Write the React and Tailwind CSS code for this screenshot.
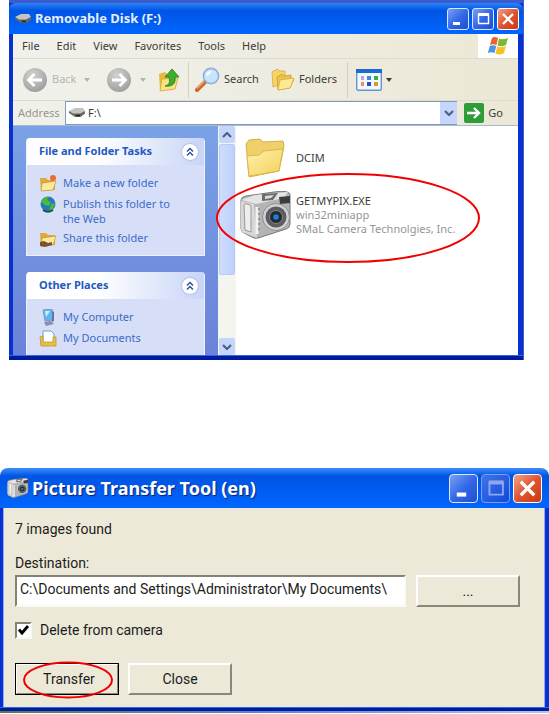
import React from "react";

function TitleButton({ kind, large, disabled }) {
  const size = large ? "w-[29px] h-[29px] rounded-[4px]" : "w-[22px] h-[22px] rounded-[3px]";
  const colour =
    kind === "close"
      ? "bg-linear-to-br from-[#f0a088] via-[#e0532f] to-[#c83a10] border-white"
      : disabled
        ? "bg-linear-to-br from-[#3f74ea] to-[#0f48d8] border-[#7d9df2]"
        : "bg-linear-to-br from-[#7ba0f5] via-[#3468e6] to-[#1d4fd0] border-[#dbe6ff]";
  const stroke = disabled ? "#8fa6ee" : "#fff";
  return (
    <button type="button" aria-label={kind} disabled={disabled} className={`block shrink-0 border ${size} ${colour}`}>
      <svg viewBox="0 0 20 20" className="block h-full w-full" fill="none" stroke={stroke}>
        {kind === "minimize" && <path d="M5 14.5h7" strokeWidth="3" />}
        {kind === "maximize" && (
          <>
            <path d="M5 5.5h11" strokeWidth="3" />
            <path d="M5.5 5v9.5h10V5" strokeWidth="1.4" />
          </>
        )}
        {kind === "close" && <path d="M5 5l10 10M15 5L5 15" strokeWidth="2.4" />}
      </svg>
    </button>
  );
}

function Disk() {
  return (
    <svg viewBox="0 0 18 12" className="h-3 w-[18px] shrink-0">
      <path d="M1 4l6-3h8l2 3-5 3H5z" fill="#c4c4c0" />
      <path d="M1 4l4 2.5h7L17 4v2.500l-4.500 3.500H7L1 6z" fill="#66665f" />
      <path d="M8 8.500h4" stroke="#222" strokeWidth="1.500" />
    </svg>
  );
}

function RoundArrow({ forward }) {
  return (
    <svg viewBox="0 0 26 26" className="h-[26px] w-[26px] shrink-0">
      <defs>
        <radialGradient id="grey" cx="0.4" cy="0.3" r="0.8">
          <stop offset="0" stopColor="#d2d2d0" />
          <stop offset="0.7" stopColor="#aaa" />
          <stop offset="1" stopColor="#999" />
        </radialGradient>
      </defs>
      <circle cx="13" cy="13" r="12" fill="url(#grey)" />
      <path
        d={forward ? "M6 13h13M13.500 7l6 6-6 6" : "M20 13H7M12.500 7l-6 6 6 6"}
        stroke="#fff"
        strokeWidth="2.800"
        fill="none"
      />
    </svg>
  );
}

function Caret() {
  return (
    <svg viewBox="0 0 6 4" className="h-1 w-1.5 shrink-0">
      <path d="M0 0h6L3 4z" fill="currentColor" />
    </svg>
  );
}

function UpFolder() {
  return (
    <svg viewBox="0 0 22 24" className="h-6 w-[22px] shrink-0">
      <path d="M1 6l6-2 2 2h6v4l5 1-3 10-15 2z" fill="#e8b93c" />
      <path d="M4 11l16-1-3 11-15 2z" fill="#fbe384" stroke="#cfa032" strokeWidth=".7" />
      <path d="M7 18c5-1 5-5 4-9H7l7-8 7 8h-4c1 6-2 10-10 9z" fill="#3cae2c" stroke="#1c7c18" strokeWidth=".8" />
    </svg>
  );
}

function Magnifier() {
  return (
    <svg viewBox="0 0 25 25" className="h-[25px] w-[25px] shrink-0">
      <path d="M2 23l8-8" stroke="#c9682a" strokeWidth="4" strokeLinecap="round" />
      <path d="M2 21.500l7-7" stroke="#f2a868" strokeWidth="1.500" />
      <circle cx="16" cy="9" r="7.600" fill="#c8e6fb" stroke="#8fb0e4" strokeWidth="1.600" />
      <path d="M11 9c0-4 3-5 6-5-2 2-2 4-6 5z" fill="#fff" />
    </svg>
  );
}

function FoldersIcon() {
  return (
    <svg viewBox="0 0 24 24" className="h-6 w-6 shrink-0">
      <path d="M1 4l5-3 3 2h5v12L2 19z" fill="#f6d568" stroke="#d6a93a" strokeWidth=".8" />
      <path d="M6 9l5-3 2 2 7-1v3l3 1-4 9-12 2z" fill="#efc148" stroke="#d09c2c" strokeWidth=".8" />
      <path d="M9 12l14-2-4 10-12 2z" fill="#fdea95" stroke="#d6a93a" strokeWidth=".7" />
    </svg>
  );
}

function ViewsIcon() {
  return (
    <svg viewBox="0 0 26 22" className="h-[22px] w-[26px] shrink-0">
      <rect x=".7" y=".7" width="24.600" height="20.600" rx="1.500" fill="#f4f8fd" stroke="#5b96dc" strokeWidth="1.400" />
      <path d="M0 2h26" stroke="#1c6ad4" strokeWidth="4" />
      <path d="M5 7h3v4H5z" fill="#b3a7dc" />
      <path d="M11 7h4v4h-4z" fill="#3c8de0" />
      <path d="M18 7h4v4h-4z" fill="#3cae3c" />
      <path d="M5 13h3v4H5z" fill="#f48a62" />
      <path d="M11 13h4v4h-4z" fill="#2a50b8" />
      <path d="M18 13h4v4h-4z" fill="#d0a028" />
    </svg>
  );
}

function Flag() {
  return (
    <svg viewBox="0 0 22 20" className="h-5 w-[22px]">
      <path d="M5 2c2-1.500 4-1 6 0L9.500 9C7 8 5 8 3 9z" fill="#f0602c" />
      <path d="M12 2.500c3 1 5 1 9-.500L19 9c-3 1.500-6 1.500-8.500.500z" fill="#78bb30" />
      <path d="M2.800 10c2-1 4-1 6.500 0L7.500 17C5 16 3 16 .800 17z" fill="#4a96e4" />
      <path d="M10.300 10.500c3 1 5 1 8.500-.500L17 17c-3 2-6 2-8.500.500z" fill="#f8c128" />
    </svg>
  );
}

function Camera({ className }) {
  return (
    <svg viewBox="0 0 52 48" className={className}>
      <path d="M1 9q0-3 5-4L34 1q14-2 16 2v30q0 4-4 5L18 47q-3 1-6-1L4 42q-3-1-3-5z" fill="#b4b4b4" stroke="#777" />
      <path d="M1 10l13 3 3 34L4 42q-3-1-3-5z" fill="#d8d8d8" />
      <path d="M4 14q0-2 3-1 4 0 4 3v25l-6-2z" fill="#eee" stroke="#999" />
      <path d="M1 9l14-5 33-3-4 6-28 6z" fill="#e4e4e4" />
      <path d="M22 3l16-1-5 7-11 1z" fill="#6c6c6c" />
      <path d="M25 5l9-1-3 3-6 1z" fill="#ddd" />
      <path d="M39 6l11-1v7l-10 1z" fill="#3d3d3d" />
      <path d="M17 16v27" stroke="#f2f2f2" strokeWidth="3" />
      <path d="M19 17v25" stroke="#888" strokeWidth="1.500" strokeDasharray="2 3" />
      <circle cx="36" cy="26" r="13.500" fill="#d2d2d2" stroke="#8e8e8e" />
      <circle cx="36" cy="26" r="10.500" fill="#5a5d62" />
      <circle cx="36" cy="26" r="6.500" fill="#25282c" stroke="#888" />
      <circle cx="36" cy="26" r="2.800" fill="#1c7ce0" />
    </svg>
  );
}

function BigFolder() {
  return (
    <svg viewBox="0 0 40 40" className="h-10 w-10">
      <defs>
        <linearGradient id="folder" x1="0" y1="0" x2="1" y2="1">
          <stop offset="0" stopColor="#fff3ae" />
          <stop offset="1" stopColor="#f4cf58" />
        </linearGradient>
      </defs>
      <path d="M1 6l3-4 11-1 3 3 20-1 1 5-5 25L4 39z" fill="#f0d069" stroke="#d4b04a" />
      <path d="M2 18l12-1 5-4 19-2-4 22L4 38z" fill="url(#folder)" stroke="#dcb850" />
    </svg>
  );
}

function TaskIcon({ kind }) {
  return (
    <svg viewBox="0 0 18 17" className="h-[17px] w-[18px] shrink-0">
      {(kind === "new" || kind === "share") && (
        <>
          <path d="M1 3h6l2 2h7v10l-14 1z" fill="#e0a93a" />
          <path d="M3 8l14-2-3 9-12 1z" fill="#fde99a" stroke="#b9882c" strokeWidth=".6" />
        </>
      )}
      {kind === "new" && <circle cx="14" cy="3" r="3" fill="#ee6c32" />}
      {kind === "share" && <path d="M1 12l4-1 4 2 4-1v3l-7 2-5-1z" fill="#80502c" />}
      {kind === "web" && (
        <>
          <circle cx="9" cy="8" r="7.500" fill="#2778c4" />
          <path d="M2 6c2-4 5-6 8-5L8 4l4 2-2 4-4-1zM12 8l4-1-2 6-4 2z" fill="#49bb38" />
          <path d="M4 14c3 2 7 2 10 0" stroke="#19594e" strokeWidth="2" fill="none" />
        </>
      )}
      {kind === "computer" && (
        <>
          <path d="M4 1l9-1 1 11-8 1z" fill="#5eb7f0" stroke="#8298bc" />
          <path d="M6 2l5 0-4 6z" fill="#c8efff" />
          <path d="M13 2l2 1v9l-2 1z" fill="#657798" />
          <path d="M5 13l7-1 3 3-8 2z" fill="#8b8fa8" />
        </>
      )}
      {kind === "documents" && (
        <>
          <path d="M4 1h8l3 3v9H4z" fill="#fff" stroke="#6f9cd0" />
          <path d="M1 7l3-1v6h10V7l3 0v9H2z" fill="#eabf42" stroke="#b98c2b" strokeWidth=".7" />
        </>
      )}
    </svg>
  );
}

function Task({ kind, children }) {
  return (
    <a href="#" className="flex items-start gap-1.5 text-[11px] leading-[15px] text-[#3c6bc9]">
      <TaskIcon kind={kind} />
      <span>{children}</span>
    </a>
  );
}

function TaskPanel({ title, children }) {
  return (
    <section className="shrink-0 rounded-t-[4px] border-x border-b border-[#edf1fc] bg-[#d6dff7]">
      <header className="flex h-[27px] items-center justify-between rounded-t-[3px] bg-linear-to-r from-white from-40% to-[#c8d5f7] pr-1.5 pl-3">
        <h2 className="text-[11px] font-bold text-[#2459c2]">{title}</h2>
        <button type="button" aria-label={`Collapse ${title}`} className="h-4 w-4 rounded-full bg-white shadow-[0_0_2px_#8090b8]">
          <svg viewBox="0 0 16 16" className="h-4 w-4" fill="none" stroke="#31549f" strokeWidth="1.500">
            <path d="M5 7.500l3-3 3 3M5 11.500l3-3 3 3" />
          </svg>
        </button>
      </header>
      <div className="flex flex-col gap-1 pt-2.5 pb-2 pl-3">{children}</div>
    </section>
  );
}

function ScrollButton({ up }) {
  return (
    <button type="button" aria-label={up ? "Scroll up" : "Scroll down"} className="flex h-[17px] shrink-0 items-center justify-center rounded-[2px] bg-[#c6d5fc]">
      <svg viewBox="0 0 10 6" className="h-1.5 w-2.5" fill="none" stroke="#4d6185" strokeWidth="2.200">
        <path d={up ? "M1 5l4-4 4 4" : "M1 1l4 4 4-4"} />
      </svg>
    </button>
  );
}

function Explorer() {
  return (
    <section className="relative mr-[25px] ml-[9px] border-t-[3px] border-r border-[#3c5ccc] bg-[#0831d0] font-['Noto_Sans',sans-serif] text-[11px] text-[#3c3c38]">
      <header className="flex h-[31px] items-center gap-[3px] rounded-t-[6px] bg-linear-to-b from-[#2b83f8] via-[#0054e4] via-25% to-[#0066ff] pr-1 pl-[5px]">
        <Disk />
        <h1 className="flex-1 text-[13px] font-bold text-[#e6eeff]">Removable Disk (F:)</h1>
        <TitleButton kind="minimize" />
        <TitleButton kind="maximize" />
        <TitleButton kind="close" />
      </header>
      <div className="mr-[5px] ml-1">
        <nav className="flex h-6 items-center bg-linear-to-r from-[#f1f1ec] to-[#ece8d6] pl-[9px]">
          <div className="flex flex-1 gap-[17px]">
            <button type="button">File</button>
            <button type="button">Edit</button>
            <button type="button">View</button>
            <button type="button">Favorites</button>
            <button type="button">Tools</button>
            <button type="button">Help</button>
          </div>
          <div className="flex h-full w-10 items-center justify-center bg-white">
            <Flag />
          </div>
        </nav>
        <div className="flex h-[43px] items-center border-y border-[#dedbca] bg-linear-to-r from-[#f1f1ec] to-[#ece8d6] pl-[9px]">
          <button type="button" className="flex w-[72px] items-center gap-1 text-[#b5b5ad]">
            <RoundArrow />
            <span className="w-7 text-left">Back</span>
            <Caret />
          </button>
          <button type="button" aria-label="Forward" className="ml-3 flex w-[52px] items-center gap-2 text-[#b5b5ad]">
            <RoundArrow forward />
            <Caret />
          </button>
          <button type="button" aria-label="Up">
            <UpFolder />
          </button>
          <span className="ml-2 h-9 w-px bg-[#d2cfbd]" />
          <button type="button" className="ml-1.5 flex w-[76px] items-center gap-1">
            <Magnifier />
            Search
          </button>
          <button type="button" className="flex w-[72px] items-center gap-1">
            <FoldersIcon />
            Folders
          </button>
          <span className="ml-1 h-9 w-px bg-[#d2cfbd]" />
          <button type="button" aria-label="Views" className="ml-2 flex items-center gap-1">
            <ViewsIcon />
            <Caret />
          </button>
        </div>
        <div className="flex h-6 items-center bg-linear-to-r from-[#f1f1ec] to-[#ece8d6] pr-[15px]">
          <label htmlFor="address" className="w-[52px] shrink-0 pl-[5px] text-[#969689]">Address</label>
          <div className="flex h-full min-w-0 flex-1 items-center border-y border-l border-[#7f9db9] bg-white pl-0.5">
            <Disk />
            <input id="address" defaultValue="F:\" className="min-w-0 flex-1 bg-transparent pl-0.5 outline-none" />
            <button type="button" aria-label="Address list" className="flex h-full w-[17px] items-center justify-center bg-[#c6d5fc]">
              <svg viewBox="0 0 10 6" className="h-1.5 w-2.5" fill="none" stroke="#4d6185" strokeWidth="2.200">
                <path d="M1 1l4 4 4-4" />
              </svg>
            </button>
          </div>
          <button type="button" className="ml-[7px] flex items-center gap-1">
            <svg viewBox="0 0 20 20" className="h-5 w-5">
              <rect width="20" height="20" rx="2" fill="#2e9d38" />
              <path d="M3 10h12M10 5l5 5-5 5" fill="none" stroke="#fff" strokeWidth="2.400" />
            </svg>
            Go
          </button>
        </div>
        <div className="flex h-[230px] border-t border-[#a9b9d2] bg-white">
          <aside className="flex w-[205px] shrink-0 flex-col gap-4 overflow-hidden bg-linear-to-b from-[#7ba2e7] to-[#6b82d8] px-[13px] pt-3">
            <TaskPanel title="File and Folder Tasks">
              <Task kind="new">Make a new folder</Task>
              <Task kind="web">
                Publish this folder to
                <br />
                the Web
              </Task>
              <Task kind="share">Share this folder</Task>
            </TaskPanel>
            <TaskPanel title="Other Places">
              <Task kind="computer">My Computer</Task>
              <Task kind="documents">My Documents</Task>
            </TaskPanel>
          </aside>
          <div className="flex w-[18px] shrink-0 flex-col bg-[#f5f5f0] px-px">
            <ScrollButton up />
            <div className="mt-px h-[131px] rounded-[2px] border border-[#b9cbf5] bg-linear-to-r from-[#cfdcfd] to-[#bdd0fb]" />
            <div className="flex-1" />
            <ScrollButton />
          </div>
          <ul className="flex min-w-0 flex-1 flex-col gap-[13px] pt-3 pl-1">
            <li className="flex h-10 items-center gap-[11px] pl-[5px]">
              <BigFolder />
              <span>DCIM</span>
            </li>
            <li className="relative flex items-center gap-1">
              <Camera className="h-12 w-[52px] shrink-0" />
              <div className="leading-[14px] whitespace-nowrap text-[#959595]">
                <p className="text-[#3c3c38]">GETMYPIX.EXE</p>
                <p>win32miniapp</p>
                <p>SMaL Camera Technolgies, Inc.</p>
              </div>
              <svg viewBox="0 0 264 90" className="pointer-events-none absolute -top-[18px] -left-6 h-[90px] w-[264px]">
                <ellipse cx="132" cy="45" rx="131" ry="44" fill="none" stroke="#f00000" strokeWidth="2" />
              </svg>
            </li>
          </ul>
        </div>
      </div>
      <div className="h-[5px] border-t border-[#2c68e8] bg-[#001c9c]" />
    </section>
  );
}

function TransferTool() {
  return (
    <section className="bg-[#0831d0] font-['Roboto',Arial,sans-serif] text-[14px] leading-[18px] text-[#1c1c1c]">
      <div className="bg-white">
        <header className="flex h-10 items-center gap-[3px] rounded-t-[8px] bg-linear-to-b from-[#3a8eff] via-[#0054e4] via-20% to-[#0066ff] px-[7px]">
          <Camera className="h-5 w-[22px] shrink-0" />
          <h2 className="flex-1 font-['Noto_Sans',sans-serif] text-[18px] font-bold text-white [text-shadow:1px_1px_1px_#0a1f78]">
            Picture Transfer Tool (en)
          </h2>
          <TitleButton kind="minimize" large />
          <TitleButton kind="maximize" large disabled />
          <TitleButton kind="close" large />
        </header>
      </div>
      <div className="mr-1 ml-[3px] border-x border-[#8facf0] bg-[#ece9d8] px-[11px] pt-3 pb-3">
        <p>7 images found</p>
        <label htmlFor="destination" className="mt-4 block">Destination:</label>
        <div className="mt-[3px] mr-[13px] flex gap-2.5">
          <input
            id="destination"
            defaultValue={"C:\\Documents and Settings\\Administrator\\My Documents\\"}
            className="h-8 min-w-0 flex-1 border-2 border-t-[#858276] border-r-[#faf9f4] border-b-[#faf9f4] border-l-[#858276] bg-white pr-1 pb-1 pl-[3px] outline-none"
          />
          <button type="button" className="h-8 w-[104px] border-2 border-t-white border-r-[#8b887a] border-b-[#8b887a] border-l-white">...</button>
        </div>
        <label className="mt-3.5 flex items-center gap-2">
          <span className="relative flex h-[17px] w-[17px]">
            <input type="checkbox" defaultChecked className="peer h-[17px] w-[17px] appearance-none border-2 border-t-[#858276] border-r-[#faf9f4] border-b-[#faf9f4] border-l-[#858276] bg-white" />
            <svg viewBox="0 0 17 17" className="pointer-events-none absolute inset-0 hidden h-[17px] w-[17px] peer-checked:block">
              <path d="M4 7.500l3 3.500 6-7" fill="none" stroke="#000" strokeWidth="2.800" />
            </svg>
          </span>
          Delete from camera
        </label>
        <div className="mt-6 flex gap-[9px]">
          <button type="button" className="relative h-8 w-[104px] border border-black p-0">
            <span className="flex h-full items-center justify-center border border-t-white border-r-[#8b887a] border-b-[#8b887a] border-l-white pl-1">Transfer</span>
            <svg viewBox="0 0 90 38" className="pointer-events-none absolute -top-[3px] left-[7px] h-[38px] w-[90px]">
              <ellipse cx="45" cy="19" rx="44" ry="17.500" fill="none" stroke="#f00000" strokeWidth="2" />
            </svg>
          </button>
          <button type="button" className="h-8 w-[104px] border-2 border-t-white border-r-[#8b887a] border-b-[#8b887a] border-l-white">Close</button>
        </div>
      </div>
      <div className="h-1 border-t border-[#2c68e8] bg-[#001c9c]" />
      <div className="h-0.5 bg-linear-to-r from-[#577a52] via-[#5c86d8] to-[#b8c4e4]" />
    </section>
  );
}

export default function App() {
  return (
    <main className="flex min-h-screen flex-col gap-[108px] bg-white">
      <Explorer />
      <TransferTool />
    </main>
  );
}
